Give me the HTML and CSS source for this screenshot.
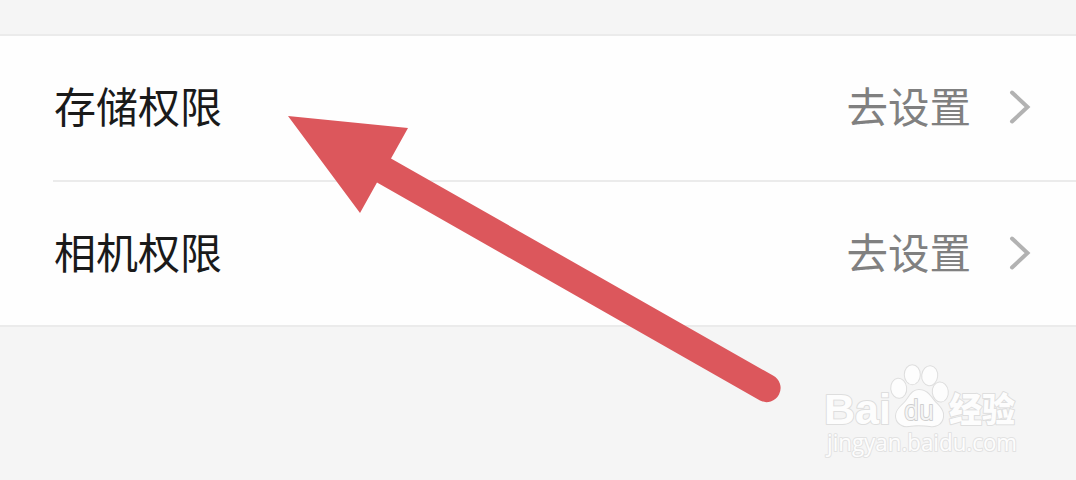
FILE: index.html
```html
<!DOCTYPE html>
<html lang="zh-CN">
<head>
  <meta charset="UTF-8">
  <meta name="viewport" content="width=device-width, initial-scale=1.0">
  <title>权限设置</title>
  <link rel="stylesheet" href="styles.css">
</head>
<body>
  <main class="page">
    <ul class="list">
      <li class="row">
        <span class="label">存储权限</span>
        <span class="value">去设置</span>
        <svg class="chevron" width="24" height="38" viewBox="0 0 24 38">
          <path d="M4 4.500L19.500 19L4 33.500"/>
        </svg>
      </li>
      <li class="row">
        <span class="label">相机权限</span>
        <span class="value">去设置</span>
        <svg class="chevron" width="24" height="38" viewBox="0 0 24 38">
          <path d="M4 4.500L19.500 19L4 33.500"/>
        </svg>
      </li>
    </ul>

    <svg class="arrow" width="500" height="300" viewBox="0 0 500 300">
      <path d="M8 16L128 28L111 58.500L493 275.500A14 14 0 0 1 480 300.500L97 82.500L80 113Z"/>
    </svg>

    <svg class="watermark" width="220" height="104" viewBox="0 0 220 104">
      <text class="brand" x="4" y="64" textLength="67" lengthAdjust="spacingAndGlyphs">Bai</text>
      <g class="paw">
        <ellipse cx="78.700" cy="28.300" rx="7.500" ry="9.500" transform="rotate(-6 78.700 28.300)"/>
        <ellipse cx="92.300" cy="14.700" rx="7.500" ry="9.500"/>
        <ellipse cx="109.700" cy="15.700" rx="7.500" ry="9.500" transform="rotate(6 109.700 15.700)"/>
        <ellipse cx="120.300" cy="32" rx="7.500" ry="9.500" transform="rotate(-6 120.300 32)"/>
        <path d="M99 30C107 30 110 36 115 42C120 47 124 51 123 57C122 64 116 67 110 66C103 65 95 65 89 66C81 67 76 62 76 56C76 49 82 46 86 41C90 36 92 30 99 30Z"/>
      </g>
      <text class="du" x="84" y="60" textLength="30" lengthAdjust="spacingAndGlyphs">du</text>
      <text class="brand-cn" x="129" y="62" textLength="66" lengthAdjust="spacingAndGlyphs">经验</text>
      <text class="site" x="7" y="90.500" textLength="190" lengthAdjust="spacingAndGlyphs">jingyan.baidu.com</text>
    </svg>
  </main>
</body>
</html>
```

FILE: styles.css
```css
* {
  box-sizing: border-box;
}
body {
  margin: 0;
  background-color: #f5f5f5;
  font-family: "Noto Sans CJK SC", sans-serif;
}
.page {
  position: relative;
  height: 480px;
  padding-top: 34px;
  overflow: hidden;
}
.list {
  margin: 0;
  padding: 0 0 0 53px;
  list-style: none;
  background-color: #fefefe;
  border-top: 2px solid #ebebeb;
  border-bottom: 2px solid #ebebeb;
}
.row {
  display: flex;
  align-items: center;
  height: 144px;
  padding: 0 44px 2px 0;
  font-size: 42px;
  line-height: 60px;
}
.row + .row {
  height: 145px;
  padding-bottom: 1px;
  border-top: 2px solid #ebebeb;
}
.label,
.value {
  padding-bottom: 5px;
}
.label {
  flex: 1;
  padding-left: 1px;
  color: #1a1a1a;
}
.value {
  color: #808080;
  font-size: 41.500px;
}
.chevron {
  margin-left: 37px;
  fill: none;
  stroke: #b2b2b2;
  stroke-width: 4;
  stroke-linecap: round;
}
.arrow {
  position: absolute;
  left: 280px;
  top: 100px;
  overflow: visible;
  fill: #dc575c;
}
.watermark {
  position: absolute;
  left: 820px;
  top: 360px;
  fill: #fdfdfd;
  stroke: #dedede;
  stroke-width: 2;
  stroke-linejoin: round;
  paint-order: stroke;
}
.brand {
  font: bold 42px "Liberation Sans", sans-serif;
}
.du {
  font: 27px "Open Sans", sans-serif;
  fill: #f5f5f5;
  stroke: #cfcfcf;
}
.brand-cn {
  font: 900 34px "Noto Sans CJK SC", sans-serif;
}
.site {
  font: 24px "Open Sans", sans-serif;
  stroke: #e2e2e2;
}
```
